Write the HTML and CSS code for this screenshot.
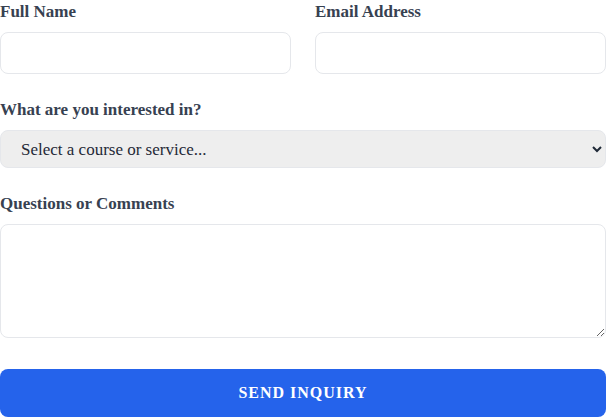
FILE: index.html
```html
<!DOCTYPE html>
<html lang="en">
<head>
<meta charset="utf-8">
<title>Inquiry Form</title>
<link rel="stylesheet" href="styles.css">
</head>
<body>
<form class="inquiry-form">
  <div class="row">
    <div class="field">
      <label class="label" for="name">Full Name</label>
      <input class="input" id="name" type="text">
    </div>
    <div class="field">
      <label class="label" for="email">Email Address</label>
      <input class="input" id="email" type="email">
    </div>
  </div>
  <div class="field">
    <label class="label" for="interest">What are you interested in?</label>
    <select class="select" id="interest">
      <option>Select a course or service...</option>
    </select>
  </div>
  <div class="field">
    <label class="label" for="comments">Questions or Comments</label>
    <textarea class="textarea" id="comments"></textarea>
  </div>
  <button class="submit" type="button">Send Inquiry</button>
</form>
</body>
</html>
```
FILE: styles.css
```css
* { box-sizing: border-box; }
html, body { margin: 0; padding: 0; background: #fff; }
body {
  font-family: "Liberation Serif", "DejaVu Serif", serif;
  color: #374151;
  width: 606px;
  overflow: hidden;
}
.inquiry-form {
  display: flex;
  flex-direction: column;
  gap: 24px;
}
.row {
  display: grid;
  grid-template-columns: 1fr 1fr;
  gap: 24px;
}
.field {
  display: flex;
  flex-direction: column;
  gap: 8px;
}
.label {
  font-size: 17px;
  font-weight: 700;
  line-height: 24px;
  color: #374151;
}
.input {
  height: 42px;
  border: 1px solid #e5e7eb;
  border-radius: 8px;
  background: #fff;
  font: inherit;
  padding: 0 12px;
}
.select {
  height: 38px;
  border: 1px solid #e5e7eb;
  border-radius: 8px;
  background: #eeeeee;
  font-family: inherit;
  font-size: 17px;
  color: #1f2937;
  padding: 0 16px;
}
.textarea {
  height: 114px;
  border: 1px solid #e5e7eb;
  border-radius: 8px;
  background: #fff;
  font: inherit;
  resize: vertical;
  display: block;
}
.submit {
  margin-top: 7px;
  height: 48px;
  border: none;
  border-radius: 8px;
  background: #2563eb;
  color: #fff;
  font-family: inherit;
  font-size: 16px;
  font-weight: 700;
  letter-spacing: 1px;
  text-transform: uppercase;
}
```
